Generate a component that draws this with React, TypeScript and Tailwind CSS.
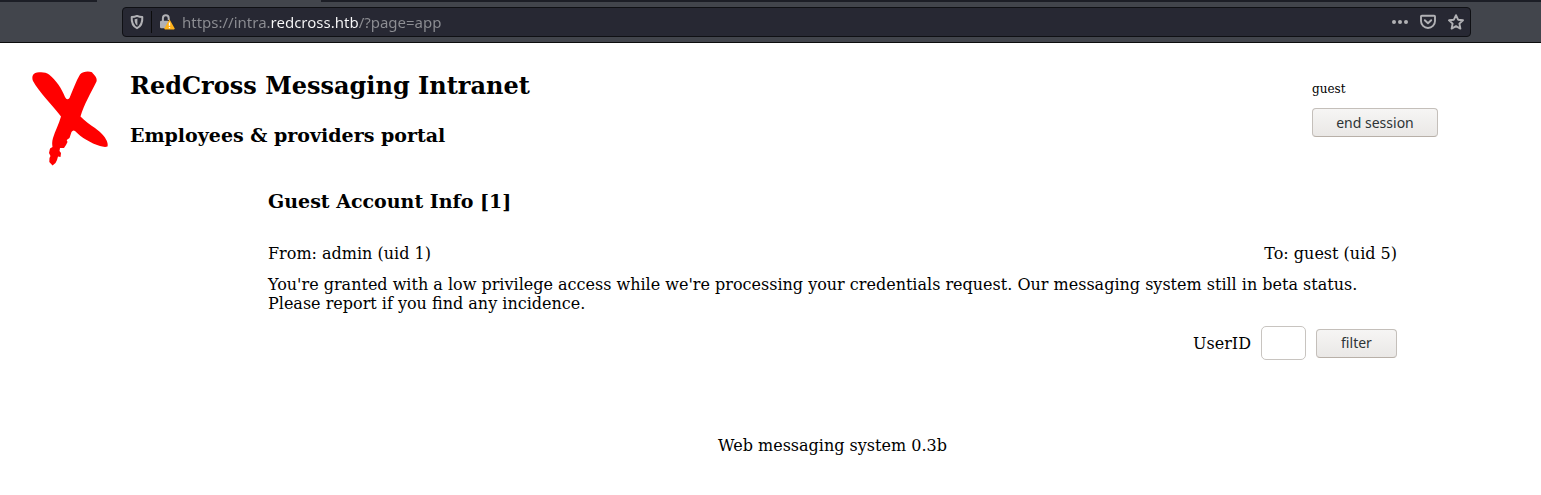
import React from "react";

function ShieldIcon() {
  return (
    <svg viewBox="0 0 16 16" className="h-4 w-4 shrink-0" fill="none" aria-hidden="true">
      <path d="M8 1.9 C6 2.8 4.3 3 2.7 3 C2.3 9 4 12.2 8 14.2 C12 12.2 13.7 9 13.3 3 C11.7 3 10 2.8 8 1.9 Z" stroke="#b1b1b5" strokeWidth="2" strokeLinejoin="round" />
      <path d="M8.4 4.6 C7.6 5 6.5 5.2 5.6 5.2 C5.6 8.3 6.2 10.3 8.4 11.6 Z" fill="#b1b1b5" />
    </svg>
  );
}

function LockWarningIcon() {
  return (
    <svg viewBox="0 0 16 16" className="h-4 w-4 shrink-0" fill="none" aria-hidden="true">
      <path d="M3.9 7.4 V4.2 a2.9 2.9 0 0 1 5.8 0 V6" stroke="#b1b1b5" strokeWidth="2" />
      <rect x="1" y="6.7" width="9" height="7.5" rx="1.2" fill="#b1b1b5" />
      <path d="M10.5 5.2 L15.6 14.2 a0.8 0.8 0 0 1 -.7 1.2 H6.1 a0.8 0.8 0 0 1 -.7 -1.2 Z" fill="#ffb21a" />
      <path d="M10.5 8.6 V11.8 M10.5 12.9 V14.2" stroke="#fff" strokeWidth="1.3" />
    </svg>
  );
}

function DotsIcon() {
  return (
    <svg viewBox="0 0 16 16" className="h-4 w-4" fill="#b1b1b5" aria-hidden="true">
      <circle cx="2" cy="8" r="2" />
      <circle cx="8" cy="8" r="2" />
      <circle cx="14" cy="8" r="2" />
    </svg>
  );
}

function PocketIcon() {
  return (
    <svg viewBox="0 0 16 16" className="h-4 w-4" fill="none" stroke="#b1b1b5" strokeWidth="1.9" strokeLinecap="round" strokeLinejoin="round" aria-hidden="true">
      <path d="M1.9 1.7 H14.1 a0.9 0.9 0 0 1 .9 .9 V7 a7 7 0 0 1 -14 0 V2.6 a0.9 0.9 0 0 1 .9 -.9 Z" />
      <path d="M4.8 6.2 L8 9.3 L11.2 6.2" />
    </svg>
  );
}

function StarIcon() {
  return (
    <svg viewBox="0 0 16 16" className="h-4 w-4" fill="none" stroke="#b1b1b5" strokeWidth="1.9" strokeLinejoin="round" aria-hidden="true">
      <path d="M8 1.2 L10.1 5.7 L15 6.3 L11.4 9.6 L12.4 14.6 L8 12.1 L3.6 14.6 L4.6 9.6 L1 6.3 L5.9 5.7 Z" />
    </svg>
  );
}

function CrossLogo() {
  return (
    <svg viewBox="0 0 76 95" className="h-[95px] w-[76px] shrink-0" role="img" aria-label="RedCross">
      <path
        fill="#ff0000"
        d="M1 10 C-1 5 2 2 5 1.6 C9 .8 14 1 17 3.5 C24 9 30 18 33 26 Q35 30 37.5 27 C41 19 44 10 48 3.5 C51 0 57 0 60 1.2 C62 4 65.500 6 64.500 10.500 C59 22 52 33 48.500 45.500 C53 50 58 54 63 57 C67 60 72 64 74 68.500 C75.500 71 76 73 75.500 75.500 C73 76.500 70 75.500 68 75 C63 73.500 59 71.500 54.700 69 C50 66.500 46 63 43 60 Q41 58.500 39.500 61 L37.500 67 L34.700 69 L35.500 71 L34 74 L32 77 L28 77 L27.500 80 L29 82 L28.500 86 L26 85.500 L25 89 L23.500 92 L20.500 94.500 L17.300 91 L17.500 87 L18.500 85 L17 82 L18 77.500 L20.500 76 C20 73 20 70 21 67 C23 60 27 53 29 45.500 C20 33.500 7 21 1 10 Z"
      />
    </svg>
  );
}

const buttonClass =
  "h-[29px] rounded border border-[#c4bfba] border-b-[#b8b0a8] bg-linear-to-b from-[#f6f5f4] to-[#eae8e6] text-center font-['Noto_Sans',sans-serif] text-sm leading-5 text-[#2e3436]";

export default function App() {
  return (
    <div className="bg-white font-['DejaVu_Serif',serif] text-base leading-[19px] text-black">
      <nav aria-label="Browser toolbar" className="border-b border-[#0c0c0d] bg-[#42454c]">
        <div className="flex h-[2px]">
          <div className="w-[97px] bg-[#1c1e26]" />
          <div className="w-[224px]" />
          <div className="flex-1 bg-[#1c1e26]" />
        </div>
        <div className="pt-[5px] pr-[70px] pb-[5px] pl-[122px]">
          <div className="flex h-[30px] items-center rounded border border-[#0f1014] bg-[#272833] px-1.5">
            <ShieldIcon />
            <div className="ml-1.5 h-[22px] w-px bg-[#0c0c0d]" />
            <div className="ml-[7px] flex">
              <LockWarningIcon />
            </div>
            <input
              type="text"
              aria-label="Address"
              defaultValue="https://intra.redcross.htb/?page=app"
              className="ml-[7px] min-w-0 flex-1 bg-[linear-gradient(to_right,#8d8e93_89px,#f9f9fa_89px,#f9f9fa_177px,#8d8e93_177px)] bg-clip-text font-['Noto_Sans',sans-serif] text-[15px] leading-5 text-transparent outline-none"
            />
            <div className="flex gap-3">
              <button type="button" aria-label="Page actions"><DotsIcon /></button>
              <button type="button" aria-label="Save to Pocket"><PocketIcon /></button>
              <button type="button" aria-label="Bookmark this page"><StarIcon /></button>
            </div>
          </div>
        </div>
      </nav>

      <header className="flex items-start pt-7 pr-[103px] pl-8">
        <CrossLogo />
        <div className="ml-[22px] flex-1">
          <h1 className="text-2xl leading-[30px] font-bold">RedCross Messaging Intranet</h1>
          <h2 className="mt-[23px] text-[19px] leading-[22px] font-bold">Employees &amp; providers portal</h2>
        </div>
        <div className="flex flex-col items-start pt-2.5">
          <span className="text-xs leading-4">guest</span>
          <button type="button" className={buttonClass + " mt-[11px] w-[126px]"}>end session</button>
        </div>
      </header>

      <main className="pt-6 pr-36 pl-[268px]">
        <article>
          <h2 className="text-[19px] leading-[22px] font-bold">Guest Account Info [1]</h2>
          <div className="mt-8 flex justify-between">
            <span>From: admin (uid 1)</span>
            <span>To: guest (uid 5)</span>
          </div>
          <p className="mt-3">
            You're granted with a low privilege access while we're processing your credentials request. Our messaging system still in beta status. Please report if you find any incidence.
          </p>
        </article>
        <form className="mt-[13px] flex items-center justify-end" onSubmit={(e) => e.preventDefault()}>
          <label htmlFor="uid">UserID</label>
          <input id="uid" type="text" className="ml-2.5 h-[34px] w-[45px] rounded-[5px] border border-[#c8c4c0] bg-white px-2 text-sm" />
          <button type="submit" className={buttonClass + " ml-2.5 w-[81px]"}>filter</button>
        </form>
      </main>
      <footer className="pt-[76px] pr-36 pb-10 pl-[268px] text-center">Web messaging system 0.3b</footer>
    </div>
  );
}
